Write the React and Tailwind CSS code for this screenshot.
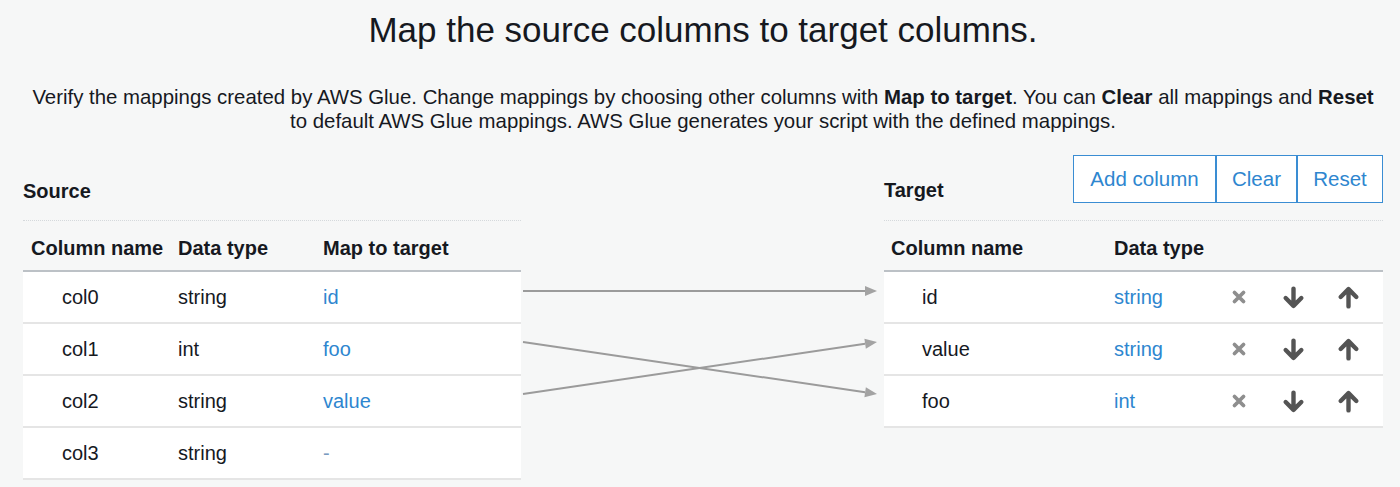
import React from 'react'

const sourceRows = [
  { name: 'col0', type: 'string', target: 'id' },
  { name: 'col1', type: 'int', target: 'foo' },
  { name: 'col2', type: 'string', target: 'value' },
  { name: 'col3', type: 'string', target: null },
]

const targetRows = [
  { name: 'id', type: 'string' },
  { name: 'value', type: 'string' },
  { name: 'foo', type: 'int' },
]

// lines between source rows and target rows (y relative to table top)
const links = [
  [71, 71],
  [122, 174],
  [174, 122],
]

function RemoveIcon() {
  return (
    <svg width="16" height="16" viewBox="0 0 16 16">
      <path d="M3.5 3.5 L12.5 12.5 M12.5 3.5 L3.5 12.5" stroke="#8e8e8e" strokeWidth="3.8" strokeLinecap="round" fill="none" />
    </svg>
  )
}

function DownIcon() {
  return (
    <svg width="23" height="23" viewBox="0 0 22 22">
      <path d="M11 2.5 V19 M3.5 11.5 L11 19 L18.5 11.5" stroke="#545454" strokeWidth="4.2" strokeLinecap="round" strokeLinejoin="round" fill="none" />
    </svg>
  )
}

function UpIcon() {
  return (
    <svg width="23" height="23" viewBox="0 0 22 22">
      <path d="M11 19.5 V3 M3.5 10.5 L11 3 L18.5 10.5" stroke="#545454" strokeWidth="4.2" strokeLinecap="round" strokeLinejoin="round" fill="none" />
    </svg>
  )
}

function MappingLines() {
  return (
    <svg width="363" height="260" viewBox="0 0 363 260" className="block">
      {links.map(([y1, y2], i) => {
        const ang = Math.atan2(y2 - y1, 354)
        const tipX = 356
        const tipY = y2
        const len = 12
        const half = 5
        const bx = tipX - len * Math.cos(ang)
        const by = tipY - len * Math.sin(ang)
        const px = -Math.sin(ang) * half
        const py = Math.cos(ang) * half
        return (
          <g key={i}>
            <line x1="2" y1={y1} x2={bx} y2={by} stroke="#9b9b9b" strokeWidth="2" />
            <polygon points={`${tipX},${tipY} ${bx + px},${by + py} ${bx - px},${by - py}`} fill="#a3a3a3" />
          </g>
        )
      })}
    </svg>
  )
}

export default function App() {
  return (
    <div className="min-h-screen bg-[#f6f7f7] text-[#16191f] font-['Liberation_Sans',Arial,sans-serif] pl-[23px] pr-[17px]">
      {/* Heading */}
      <h1 className="pt-[10px] text-center text-[35px] leading-[40px] font-normal">
        Map the source columns to target columns.
      </h1>
      <p className="mt-[35px] text-center text-[20.4px] leading-[24px] whitespace-nowrap">
        Verify the mappings created by AWS Glue. Change mappings by choosing other columns with <b>Map to target</b>. You can <b>Clear</b> all mappings and <b>Reset</b>
        <br />
        to default AWS Glue mappings. AWS Glue generates your script with the defined mappings.
      </p>

      <div className="mt-[22px] flex">
        {/* Source */}
        <div className="w-[498px] shrink-0">
          <div className="h-[48px] flex items-end">
            <h2 className="text-[20px] leading-[24px] font-bold">Source</h2>
          </div>
          <div className="mt-[17px] border-t border-dotted border-[#d5d9dc]">
            <div className="h-[51px] flex border-b-2 border-[#bcc1c6] pt-[15px] text-[20px] leading-[24px] font-bold">
              <div className="w-[155px] pl-[8px]">Column name</div>
              <div className="w-[145px]">Data type</div>
              <div>Map to target</div>
            </div>
            {sourceRows.map(r => (
              <div key={r.name} className="h-[52px] flex items-center bg-white border-b-2 border-[#e5e5e5] text-[20px] leading-[24px]">
                <div className="w-[155px] pl-[39px]">{r.name}</div>
                <div className="w-[145px]">{r.type}</div>
                <div className={r.target ? 'text-[#2e86cf]' : 'text-[#7a9bbf]'}>{r.target || '-'}</div>
              </div>
            ))}
          </div>
        </div>

        {/* Mapping arrows */}
        <div className="w-[363px] shrink-0 pt-[65px]">
          <MappingLines />
        </div>

        {/* Target */}
        <div className="w-[499px] shrink-0">
          <div className="h-[48px] flex items-end justify-between">
            <h2 className="text-[20px] leading-[24px] font-bold pb-[1px]">Target</h2>
            <div className="flex h-[48px] text-[20.5px] text-[#2e86cf]">
              <button className="w-[143px] bg-white border border-[#3a8dd3]">Add column</button>
              <button className="w-[81px] bg-white border border-[#3a8dd3]">Clear</button>
              <button className="w-[86px] bg-white border border-[#3a8dd3]">Reset</button>
            </div>
          </div>
          <div className="mt-[17px] border-t border-dotted border-[#d5d9dc]">
            <div className="h-[51px] flex border-b-2 border-[#bcc1c6] pt-[15px] text-[20px] leading-[24px] font-bold">
              <div className="w-[230px] pl-[7px]">Column name</div>
              <div>Data type</div>
            </div>
            {targetRows.map(r => (
              <div key={r.name} className="h-[52px] flex items-center bg-white border-b-2 border-[#e5e5e5] text-[20px] leading-[24px]">
                <div className="w-[230px] pl-[38px]">{r.name}</div>
                <div className="w-[97px] text-[#2e86cf]">{r.type}</div>
                <div className="w-[55px] flex justify-center"><RemoveIcon /></div>
                <div className="w-[55px] flex justify-center"><DownIcon /></div>
                <div className="w-[55px] flex justify-center"><UpIcon /></div>
              </div>
            ))}
          </div>
        </div>
      </div>
    </div>
  )
}
